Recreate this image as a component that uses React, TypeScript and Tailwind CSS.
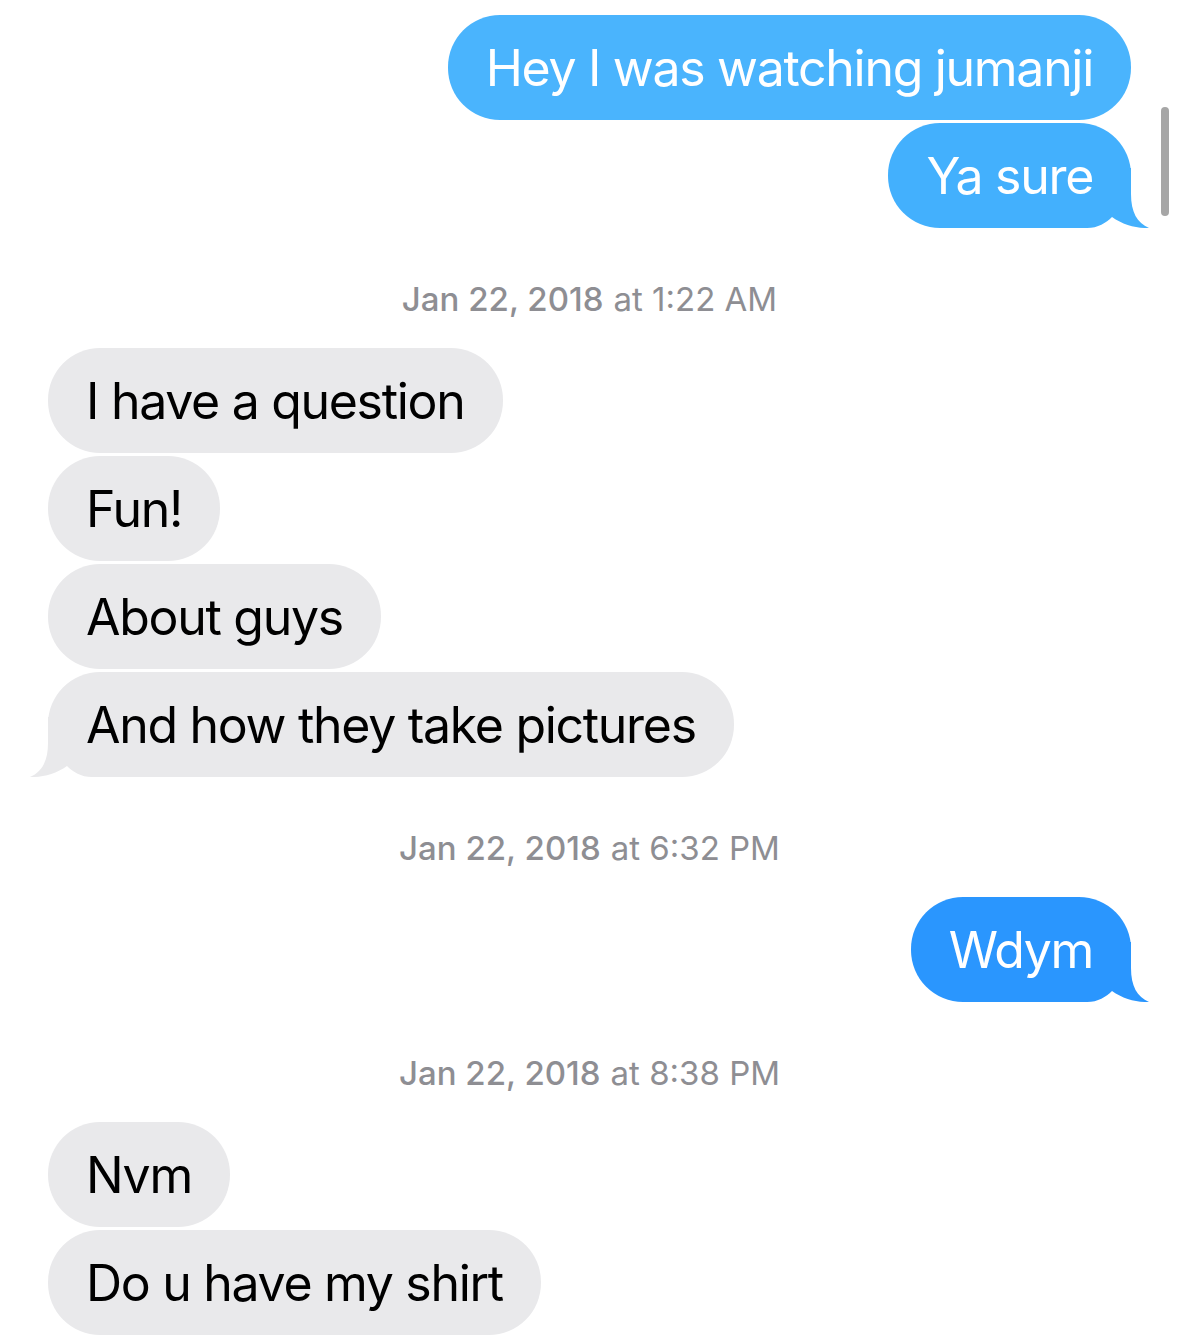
import React from "react";

type Side = "me" | "them";

function Tail({ side, color }: { side: Side; color: string }) {
  if (side === "me") {
    return (
      <svg
        className="absolute right-[-20px] bottom-0"
        width="80"
        height="60"
        viewBox="0 0 80 60"
      >
        <path
          d="M0 0 H60 V26 C60 44 66 55 78 60 C66 60.5 52 57 41 49 C35 55 27 60 16 60 H0 Z"
          fill={color}
        />
      </svg>
    );
  }
  return (
    <svg
      className="absolute left-[-20px] bottom-0"
      width="80"
      height="60"
      viewBox="0 0 80 60"
    >
      <path
        d="M80 0 H20 V26 C20 44 14 55 2 60 C14 60.5 28 57 39 49 C45 55 53 60 64 60 H80 Z"
        fill={color}
      />
    </svg>
  );
}

function Bubble({
  text,
  side,
  color,
  tail,
  className,
}: {
  text: string;
  side: Side;
  color: string;
  tail?: boolean;
  className?: string;
}) {
  return (
    <div className={`flex ${side === "me" ? "justify-end pr-[48px]" : "justify-start pl-[48px]"} ${className ?? ""}`}>
      <div
        className={`relative flex h-[105px] items-center rounded-[52px] px-[38px] ${side === "me" ? "text-white" : "text-black"}`}
        style={{ backgroundColor: color }}
      >
        {tail && <Tail side={side} color={color} />}
        <span className="relative whitespace-nowrap text-[50px] leading-none tracking-[-1.3px]">{text}</span>
      </div>
    </div>
  );
}

function Stamp({ date, time }: { date: string; time: string }) {
  return (
    <div className="mt-[48px] mb-[24px] flex h-[48px] items-center justify-center text-[33px] text-[#8e8e93]">
      <span className="font-medium">{date}</span>
      <span className="ml-[10px] font-normal">{time}</span>
    </div>
  );
}

const GRAY = "#e9e9eb";

export default function App() {
  return (
    <div
      className="relative h-[1335px] w-[1179px] overflow-hidden bg-white pt-[15px]"
      style={{ fontFamily: "Inter, 'Noto Sans', sans-serif" }}
    >
      <div className="flex flex-col">
        <Bubble text="Hey I was watching jumanji" side="me" color="#4ab4fd" />
        <Bubble text="Ya sure" side="me" color="#43b0fd" tail className="mt-[3px]" />

        <Stamp date="Jan 22, 2018" time="at 1:22 AM" />

        <Bubble text="I have a question" side="them" color={GRAY} />
        <Bubble text="Fun!" side="them" color={GRAY} className="mt-[3px]" />
        <Bubble text="About guys" side="them" color={GRAY} className="mt-[3px]" />
        <Bubble text="And how they take pictures" side="them" color={GRAY} tail className="mt-[3px]" />

        <Stamp date="Jan 22, 2018" time="at 6:32 PM" />

        <Bubble text="Wdym" side="me" color="#2a96fe" tail />

        <Stamp date="Jan 22, 2018" time="at 8:38 PM" />

        <Bubble text="Nvm" side="them" color={GRAY} />
        <Bubble text="Do u have my shirt" side="them" color={GRAY} className="mt-[3px]" />
      </div>

      <div className="absolute left-[1161px] top-[107px] h-[109px] w-[8px] rounded-full bg-[#a6a6a6]" />
    </div>
  );
}
